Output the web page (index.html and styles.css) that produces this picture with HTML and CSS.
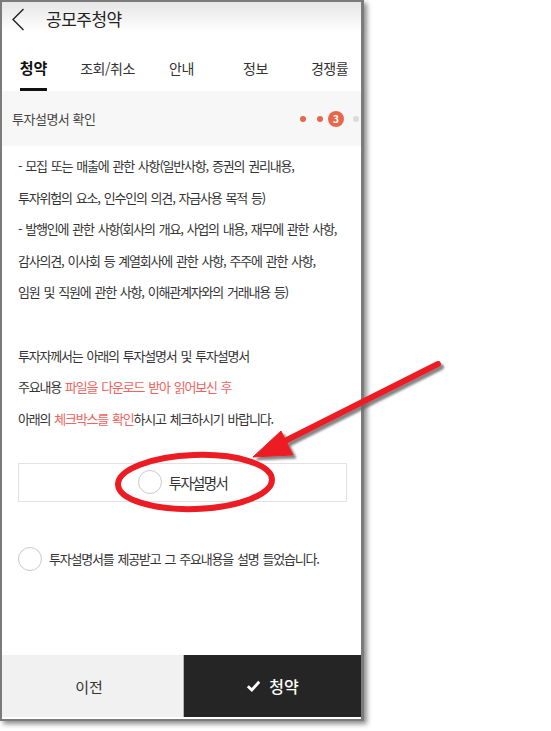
FILE: index.html
```html
<!DOCTYPE html>
<html lang="ko">
<head>
<meta charset="utf-8">
<title>공모주청약</title>
<link rel="stylesheet" href="styles.css">
</head>
<body>
<div class="phone">
  <header class="appbar">
    <svg class="back" viewBox="0 0 14 23" width="14" height="23"><polyline points="12.5,1 2,11.5 12.5,22" fill="none" stroke="#222" stroke-width="1.4"/></svg>
    <h1 class="title">공모주청약</h1>
  </header>
  <nav class="tabs">
    <div class="tab active"><span>청약</span></div>
    <div class="tab"><span>조회/취소</span></div>
    <div class="tab"><span>안내</span></div>
    <div class="tab"><span>정보</span></div>
    <div class="tab"><span>경쟁률</span></div>
  </nav>
  <div class="stepbar">
    <span class="step-title">투자설명서 확인</span>
    <div class="steps">
      <i class="dot"></i><i class="dot"></i><span class="badge">3</span><i class="dot off"></i>
    </div>
  </div>
  <main class="content">
    <p class="notice">- 모집 또는 매출에 관한 사항(일반사항, 증권의 권리내용,<br>투자위험의 요소, 인수인의 의견, 자금사용 목적 등)<br>- 발행인에 관한 사항(회사의 개요, 사업의 내용, 재무에 관한 사항,<br>감사의견, 이사회 등 계열회사에 관한 사항, 주주에 관한 사항,<br>임원 및 직원에 관한 사항, 이해관계자와의 거래내용 등)<br><br>투자자께서는 아래의 투자설명서 및 투자설명서<br>주요내용 <span class="hl">파일을 다운로드 받아 읽어보신 후</span><br>아래의 <span class="hl">체크박스를 확인</span>하시고 체크하시기 바랍니다.</p>
    <div class="docbox">
      <span class="circle"></span><span class="doc-label">투자설명서</span>
    </div>
    <div class="agree">
      <span class="circle"></span><span class="agree-label">투자설명서를 제공받고 그 주요내용을 설명 들었습니다.</span>
    </div>
  </main>
  <footer class="actions">
    <button class="prev">이전</button>
    <button class="submit"><svg class="check" viewBox="0 0 15 12" width="15" height="12"><polyline points="1.8,6.2 5.8,10 13.2,1.8" fill="none" stroke="#fff" stroke-width="2.8"/></svg><span>청약</span></button>
  </footer>
</div>
<svg class="annotation" width="551" height="731" viewBox="0 0 551 731">
  <defs>
    <filter id="sh" x="-20%" y="-20%" width="150%" height="150%">
      <feDropShadow dx="3" dy="3" stdDeviation="1" flood-color="#666" flood-opacity="0.8"/>
    </filter>
  </defs>
  <g filter="url(#sh)" fill="#ec1c24" stroke="#ec1c24">
    <line x1="438" y1="364" x2="283" y2="442" stroke-width="6" stroke-linecap="round"/>
    <polygon points="253,457 281,431 293,455" stroke-width="1" stroke-linejoin="round"/>
  </g>
  <ellipse cx="195" cy="482" rx="77" ry="27" fill="none" stroke="#ec1c24" stroke-width="6" transform="rotate(-2 195 482)"/>
</svg>
</body>
</html>
```
FILE: styles.css
```css
* { box-sizing: border-box; margin: 0; padding: 0; }
body {
  width: 551px;
  height: 731px;
  background: #fff;
  font-family: "Noto Sans CJK KR", "Noto Sans", sans-serif;
  overflow: hidden;
  position: relative;
}
.phone {
  width: 364px;
  height: 721px;
  border: 2px solid #7b7b7b;
  border-right-width: 3px;
  box-shadow: 3px 3px 5px rgba(0,0,0,0.45);
  display: flex;
  flex-direction: column;
  background: #fff;
  overflow: hidden;
}
.appbar {
  height: 32px;
  flex: none;
  display: flex;
  align-items: center;
  padding-left: 9px;
  background: linear-gradient(#e6e6e6, #fff 30px);
}
.back { display: block; margin-top: 3px; }
.title {
  font-size: 17px;
  font-weight: 400;
  letter-spacing: -0.5px;
  color: #222;
  margin-left: 21px;
}
.tabs {
  height: 57px;
  flex: none;
  display: grid;
  grid-template-columns: repeat(5, 74px);
  justify-content: center;
}
.tab {
  display: flex;
  justify-content: center;
  align-items: flex-end;
}
.tab span {
  font-size: 14px;
  line-height: 20px;
  color: #333;
  letter-spacing: -0.5px;
  padding-bottom: 10.5px;
  border-bottom: 3px solid transparent;
}
.tab.active span {
  font-size: 15px;
  font-weight: 700;
  letter-spacing: 0;
  color: #111;
  border-bottom-color: #111;
}
.stepbar {
  height: 55px;
  flex: none;
  background: #f7f7f7;
  display: flex;
  align-items: center;
  justify-content: space-between;
  padding: 0 2px 0 10px;
}
.step-title {
  font-size: 13px;
  color: #444;
  letter-spacing: -0.5px;
}
.steps { display: flex; align-items: center; }
.dot {
  display: block;
  width: 6px;
  height: 6px;
  border-radius: 50%;
  background: #e8674a;
}
.dot + .dot { margin-left: 11px; }
.dot.off { background: #dcdcdc; }
.badge {
  width: 16px;
  height: 16px;
  border-radius: 50%;
  background: #e8674a;
  color: #fff;
  font-size: 10px;
  font-weight: 700;
  display: flex;
  align-items: center;
  justify-content: center;
  margin: 0 9px 0 5px;
}
.content {
  flex: 1;
  padding: 4px 14px 0 16px;
}
.notice {
  font-size: 13px;
  line-height: 31.6px;
  color: #333;
  letter-spacing: -1.2px;
  word-spacing: 1.5px;
  white-space: nowrap;
}
.hl { color: #f0625d; }
.docbox {
  margin-top: 28.5px;
  height: 39px;
  border: 1px solid #e2e2e2;
  display: flex;
  align-items: center;
  justify-content: center;
  gap: 7px;
}
.circle {
  width: 24px;
  height: 24px;
  flex: none;
  border: 1px solid #c9c9c9;
  border-radius: 50%;
}
.doc-label {
  font-size: 14.5px;
  color: #333;
  letter-spacing: -1.6px;
}
.agree {
  margin-top: 45px;
  display: flex;
  align-items: center;
  gap: 7px;
}
.agree-label {
  font-size: 13px;
  color: #333;
  letter-spacing: -1.2px;
  word-spacing: 1.5px;
  white-space: nowrap;
}
.actions {
  height: 62px;
  flex: none;
  margin-bottom: 2px;
  display: grid;
  grid-template-columns: 181px 1fr;
}
.actions button {
  font-family: inherit;
  border: 0;
  font-size: 15px;
}
.prev {
  background: #f1f1f1;
  color: #333;
  padding-right: 7px;
}
.submit {
  background: #252525;
  color: #fff;
  border-left: 1px solid #b5b5b5 !important;
  display: flex;
  align-items: center;
  justify-content: center;
  gap: 8px;
  font-weight: 500;
  font-size: 16px !important;
}
.check { display: block; }
.annotation {
  position: absolute;
  left: 0;
  top: 0;
  pointer-events: none;
}
```
